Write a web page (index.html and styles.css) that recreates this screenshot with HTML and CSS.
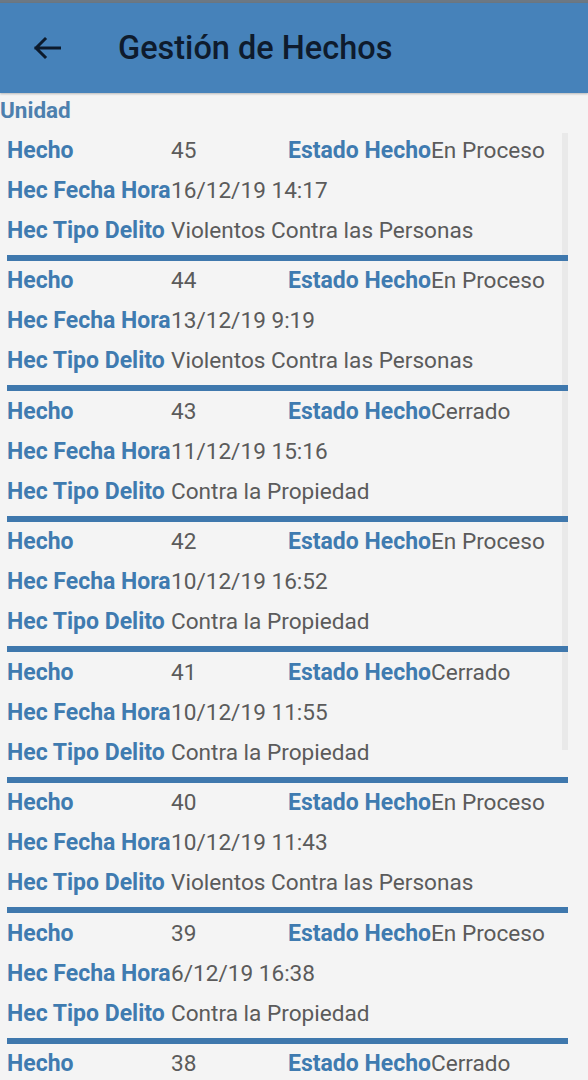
FILE: index.html
```html
<!DOCTYPE html>
<html lang="es">
<head>
    <meta charset="UTF-8">
    <meta name="viewport" content="width=device-width, initial-scale=1.0">
    <title>Gestión de Hechos</title>
    <link rel="stylesheet" href="styles.css">
</head>
<body>
    <div class="status"></div>
    <header class="appbar">
        <svg class="back" width="28" height="24" viewBox="0 0 28 24">
            <path d="M27 12H3M12 3L3 12l9 9" fill="none" stroke="#0c1a2c" stroke-width="3" stroke-linecap="square"/>
        </svg>
        <h1>Gestión de Hechos</h1>
    </header>

    <div class="unidad">Unidad</div>

    <div class="list">
        <div class="scroll"></div>

        <div class="card">
            <div class="row"><span class="label">Hecho</span><span class="num">45</span><span class="lab2">Estado Hecho</span><span>En Proceso</span></div>
            <div class="row"><span class="label">Hec Fecha Hora</span><span>16/12/19 14:17</span></div>
            <div class="row"><span class="label">Hec Tipo Delito</span><span>Violentos Contra las Personas</span></div>
            <div class="sep"></div>
        </div>

        <div class="card">
            <div class="row"><span class="label">Hecho</span><span class="num">44</span><span class="lab2">Estado Hecho</span><span>En Proceso</span></div>
            <div class="row"><span class="label">Hec Fecha Hora</span><span>13/12/19 9:19</span></div>
            <div class="row"><span class="label">Hec Tipo Delito</span><span>Violentos Contra las Personas</span></div>
            <div class="sep"></div>
        </div>

        <div class="card">
            <div class="row"><span class="label">Hecho</span><span class="num">43</span><span class="lab2">Estado Hecho</span><span>Cerrado</span></div>
            <div class="row"><span class="label">Hec Fecha Hora</span><span>11/12/19 15:16</span></div>
            <div class="row"><span class="label">Hec Tipo Delito</span><span>Contra la Propiedad</span></div>
            <div class="sep"></div>
        </div>

        <div class="card">
            <div class="row"><span class="label">Hecho</span><span class="num">42</span><span class="lab2">Estado Hecho</span><span>En Proceso</span></div>
            <div class="row"><span class="label">Hec Fecha Hora</span><span>10/12/19 16:52</span></div>
            <div class="row"><span class="label">Hec Tipo Delito</span><span>Contra la Propiedad</span></div>
            <div class="sep"></div>
        </div>

        <div class="card">
            <div class="row"><span class="label">Hecho</span><span class="num">41</span><span class="lab2">Estado Hecho</span><span>Cerrado</span></div>
            <div class="row"><span class="label">Hec Fecha Hora</span><span>10/12/19 11:55</span></div>
            <div class="row"><span class="label">Hec Tipo Delito</span><span>Contra la Propiedad</span></div>
            <div class="sep"></div>
        </div>

        <div class="card">
            <div class="row"><span class="label">Hecho</span><span class="num">40</span><span class="lab2">Estado Hecho</span><span>En Proceso</span></div>
            <div class="row"><span class="label">Hec Fecha Hora</span><span>10/12/19 11:43</span></div>
            <div class="row"><span class="label">Hec Tipo Delito</span><span>Violentos Contra las Personas</span></div>
            <div class="sep"></div>
        </div>

        <div class="card">
            <div class="row"><span class="label">Hecho</span><span class="num">39</span><span class="lab2">Estado Hecho</span><span>En Proceso</span></div>
            <div class="row"><span class="label">Hec Fecha Hora</span><span>6/12/19 16:38</span></div>
            <div class="row"><span class="label">Hec Tipo Delito</span><span>Contra la Propiedad</span></div>
            <div class="sep"></div>
        </div>

        <div class="card">
            <div class="row"><span class="label">Hecho</span><span class="num">38</span><span class="lab2">Estado Hecho</span><span>Cerrado</span></div>
        </div>
    </div>
</body>
</html>
```

FILE: styles.css
```css
body {
    margin: 0;
    background: #f4f4f4;
    font-family: Roboto, "Noto Sans", sans-serif;
    overflow: hidden;
}

.status {
    height: 3px;
    background: #6c7884;
}

.appbar {
    height: 90px;
    background: #4682ba;
    display: flex;
    align-items: center;
    padding-left: 33px;
    box-shadow: 0 1px 2px rgba(0, 0, 0, 0.25);
}
.appbar h1 {
    margin: 0 0 0 57px;
    font-size: 32.5px;
    font-weight: 500;
    color: #0e1b2d;
}

.unidad {
    height: 30px;
    line-height: 30px;
    margin-top: 2px;
    font-size: 22.5px;
    font-weight: 700;
    color: #4d80ae;
}

.list {
    position: relative;
    margin-top: 5px;
}
.scroll {
    position: absolute;
    left: 562px;
    top: 3px;
    width: 6px;
    height: 617px;
    background: #e9e9e9;
}

.card {
    width: 561px;
    margin-left: 7px;
}
.row {
    height: 40px;
    display: flex;
    align-items: center;
    font-size: 22.6px;
    color: #5b5b5b;
    white-space: nowrap;
}
.label {
    min-width: 164px;
    font-size: 23px;
    font-weight: 700;
    color: #3f7bb0;
}
.num {
    width: 117px;
}
.lab2 {
    font-size: 23px;
    font-weight: 700;
    color: #3f7bb0;
}
.sep {
    position: relative;
    margin-top: 4.5px;
    height: 6px;
    background: #3f78ad;
}
```
